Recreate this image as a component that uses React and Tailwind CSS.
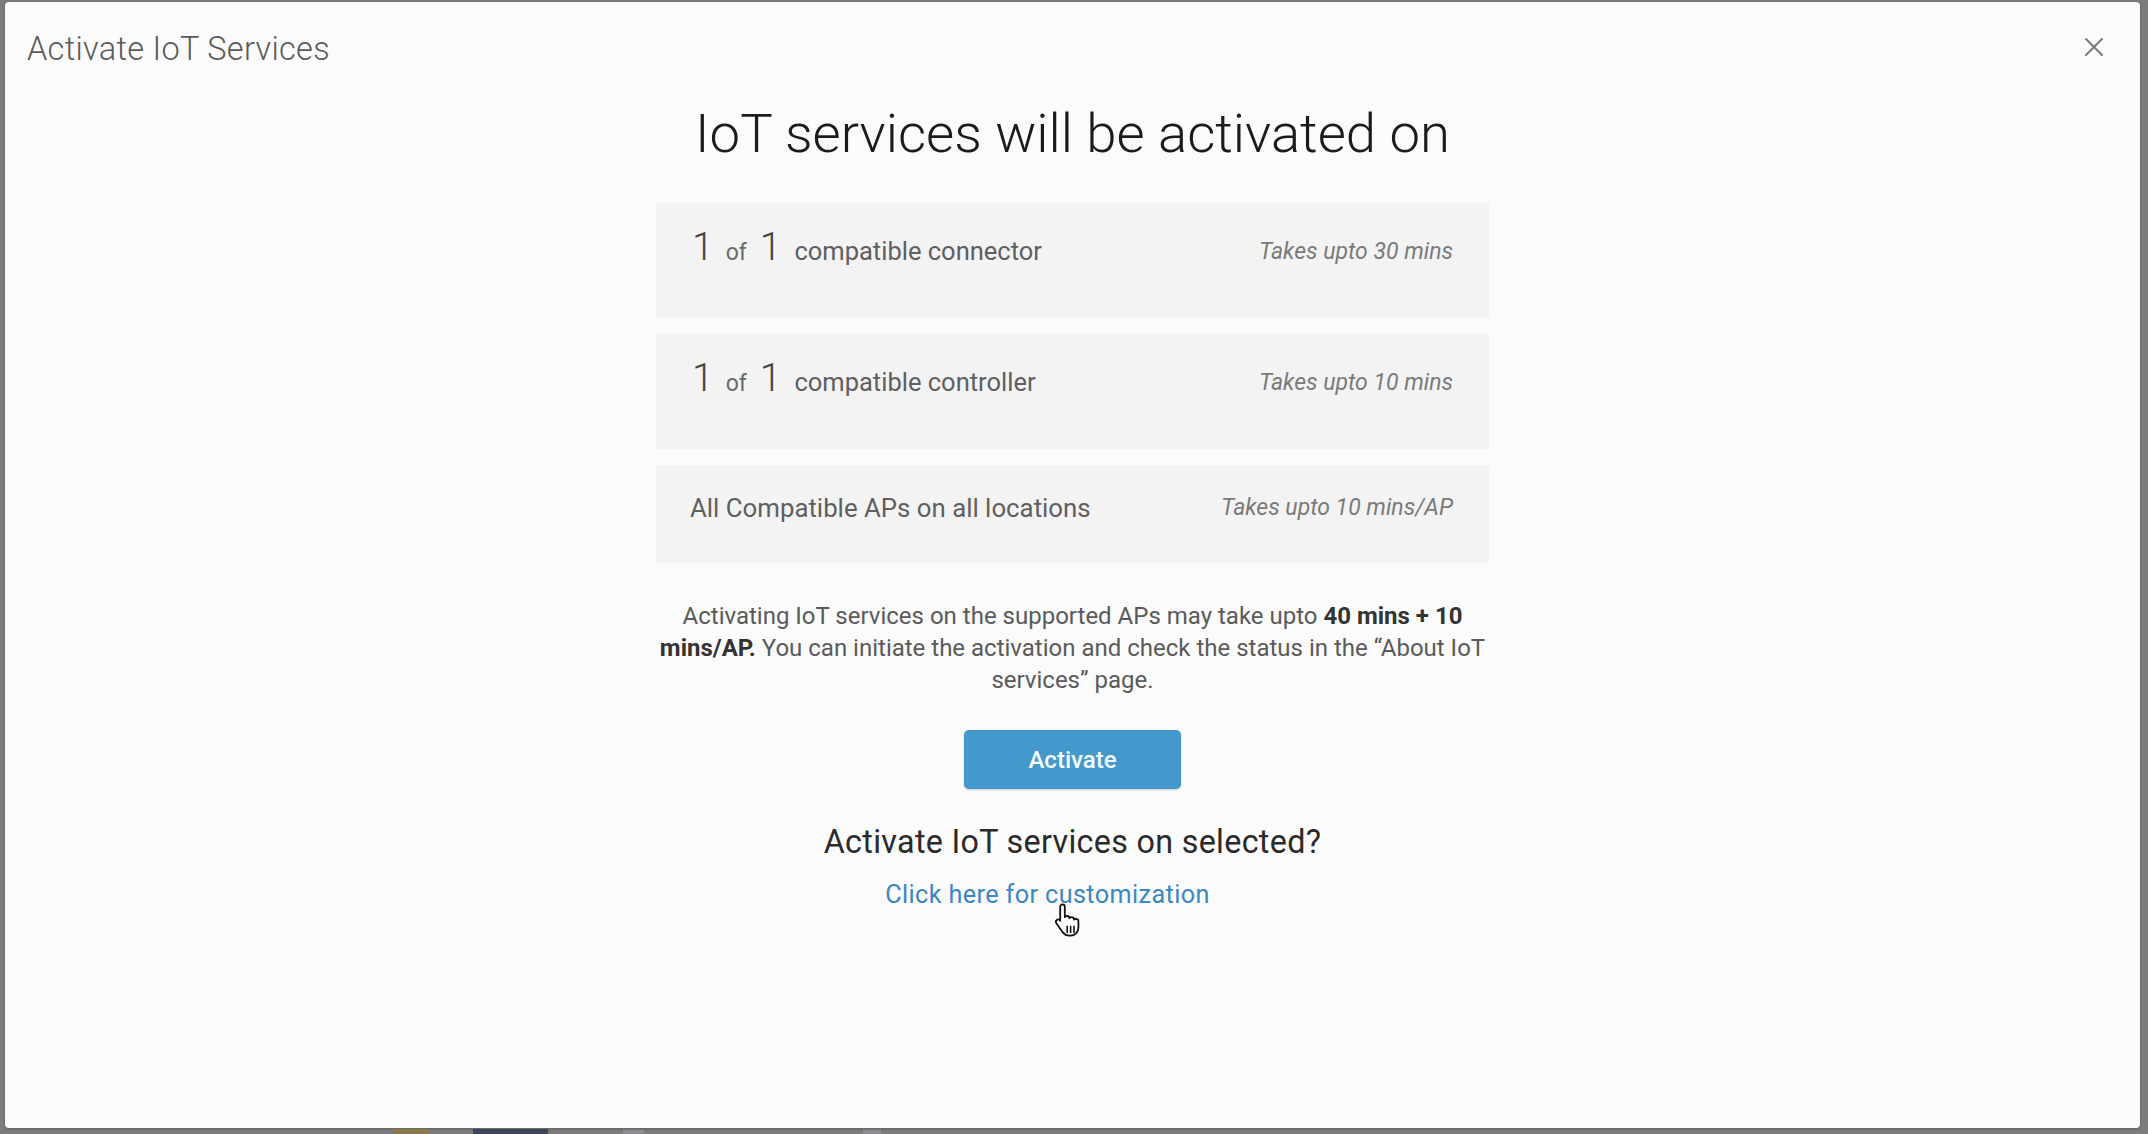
import React from "react";

function HandCursor() {
  return (
    <svg width="34" height="36" viewBox="0 0 17 18" className="absolute left-[1052px] top-[902px]">
      <path
        d="M5.2 1.2c.7 0 1.2.5 1.2 1.2v5.2c.3-.5.8-.7 1.3-.6.6.1 1 .6 1 1.1.3-.4.8-.6 1.3-.5.6.1 1 .6 1 1.2.3-.3.8-.5 1.2-.4.6.1 1 .6 1 1.2v3.2c0 2.3-1.7 4-4 4H8.6c-1.3 0-2.4-.6-3.2-1.6L2.2 10.6c-.4-.5-.3-1.2.2-1.6.5-.4 1.2-.3 1.6.2l.1.2V2.4c0-.7.5-1.2 1.1-1.2z"
        fill="#fff"
        stroke="#111"
        strokeWidth="0.9"
        strokeLinejoin="round"
      />
      <path d="M7.6 12.2v3M9.3 12.2v3M11 12.2v3" stroke="#111" strokeWidth="0.8" strokeLinecap="round" />
    </svg>
  );
}

function Row({ children, right, h }) {
  return (
    <div className={`flex w-full items-start justify-between bg-[#f3f3f3] px-[36px] ${h}`}>
      {children}
      <div className="pt-[35px] text-[23px] italic leading-[28px] text-[#7a7a7a]">{right}</div>
    </div>
  );
}

function CountLabel({ label }) {
  return (
    <div className="flex items-baseline pt-[20px] text-[#5f5f5f]">
      <span className="text-[39px] font-light leading-[48px] text-[#444]">1</span>
      <span className="ml-[12px] text-[23px] leading-[48px] text-[#6a6a6a]">of</span>
      <span className="ml-[13px] text-[39px] font-light leading-[48px] text-[#444]">1</span>
      <span className="ml-[13px] text-[25.5px] leading-[48px]">{label}</span>
    </div>
  );
}

export default function App() {
  return (
    <div
      className="relative flex h-[1134px] w-[2148px] flex-col overflow-hidden bg-[#7c7c7c]"
      style={{ fontFamily: "Roboto, 'Liberation Sans', sans-serif" }}
    >
      <div className="ml-[5px] mr-[8px] mt-[2px] flex h-[1126px] flex-col rounded-[4px] bg-[#fbfbfb] shadow-[0_1px_3px_rgba(0,0,0,0.25)]">
        <div className="flex h-[94px] items-center justify-between pl-[22px] pr-[36px]">
          <div className="text-[32.5px] font-light tracking-[0.3px] text-[#5a5a5a]">Activate IoT Services</div>
          <svg width="20" height="20" viewBox="0 0 20 20" className="mb-[4px]">
            <path d="M2 2L18 18M18 2L2 18" stroke="#7a7a7a" strokeWidth="2" strokeLinecap="round" />
          </svg>
        </div>

        <div className="flex flex-col items-center">
          <h1 className="mt-[5px] text-[54.5px] font-light leading-[64px] text-[#1b1b1b]">
            IoT services will be activated on
          </h1>

          <div className="mt-[38px] flex w-[833px] flex-col gap-4">
            <Row right="Takes upto 30 mins" h="h-[115px]">
              <CountLabel label="compatible connector" />
            </Row>
            <Row right="Takes upto 10 mins" h="h-[115px]">
              <CountLabel label="compatible controller" />
            </Row>
            <div className="flex h-[98px] w-full items-start justify-between bg-[#f3f3f3] px-[34px] pr-[36px]">
              <div className="pt-[27px] text-[25.8px] leading-[32px] text-[#5f5f5f]">All Compatible APs on all locations</div>
              <div className="pt-[29px] text-[23px] italic leading-[28px] text-[#7a7a7a]">Takes upto 10 mins/AP</div>
            </div>
          </div>

          <p className="mt-[37px] w-[860px] text-center text-[24px] leading-[32px] text-[#5a5a5a]">
            Activating IoT services on the supported APs may take upto{" "}
            <b className="font-bold text-[#333]">40 mins + 10</b>
            <br />
            <b className="font-bold text-[#333]">mins/AP.</b> You can initiate the activation and check the status in the “About IoT
            <br />
            services” page.
          </p>

          <button className="mt-[34px] h-[59px] w-[217px] rounded-[5px] bg-[#4399cc] text-[24px] font-medium text-[#f4fbff] shadow-[0_1px_2px_rgba(0,0,0,0.2)]">
            Activate
          </button>

          <div className="mt-[33px] text-[32.3px] leading-[40px] tracking-[0.3px] text-[#2a2a2a]">
            Activate IoT services on selected?
          </div>
          <div className="mr-[50px] mt-[17px] text-[25.2px] leading-[32px] tracking-[0.4px] text-[#3b87c0]">
            Click here for customization
          </div>
        </div>
      </div>

      <div className="flex h-[6px] items-end">
        <div className="ml-[393px] h-[5px] w-[36px] bg-[#8a7a4a]" />
        <div className="ml-[44px] h-[5px] w-[75px] bg-[#3e4459]" />
        <div className="ml-[75px] h-[4px] w-[21px] bg-[#8c8c94]" />
        <div className="ml-[219px] h-[4px] w-[18px] bg-[#8c8c94]" />
      </div>

      <HandCursor />
    </div>
  );
}
